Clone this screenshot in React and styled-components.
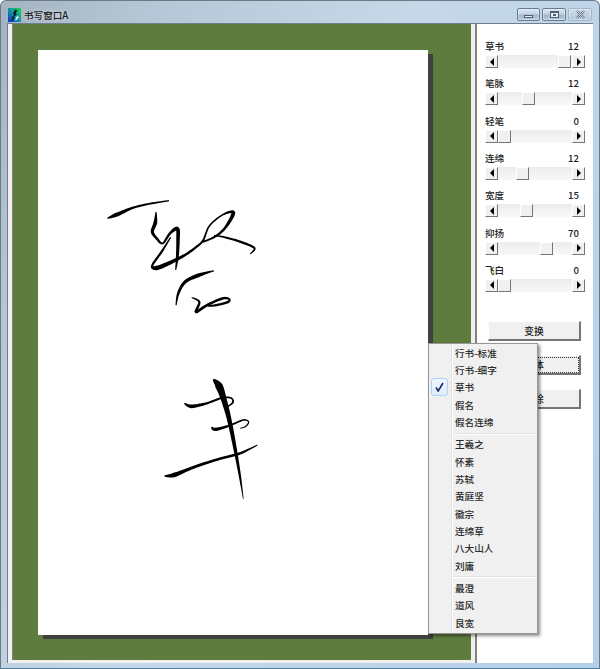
import React from "react";
import styled, {createGlobalStyle} from "styled-components";

const GlobalStyle = createGlobalStyle`
  html, body {
    margin: 0;
    padding: 0;
    background: #ffffff;
  }
  * {
    box-sizing: border-box;
  }
`

const FONT = `"Noto Sans CJK SC", "Noto Sans", sans-serif`

const Window = styled.div`
  position: relative;
  width: 600px;
  height: 669px;
  display: flex;
  flex-direction: column;
  overflow: hidden;
  padding: 0 6px 5px 6px;
  border: 1px solid #6b7a88;
  border-bottom-color: #4f7f9c;
  border-radius: 6px 6px 0 0;
  background: linear-gradient(115deg, #a4b3c0 0%, #b6c8d8 18%, #c6d8e8 45%, #b4d0ea 100%);
  font-family: ${FONT};
  font-weight: 500;
  color: #222222;
`

const TitleBar = styled.div`
  height: 22px;
  flex: none;
  display: flex;
  align-items: center;
  padding-top: 6px;
`

const AppIcon = styled.svg`
  width: 13px;
  height: 14px;
  flex: none;
  margin: 0 3px 0 1px;
`

const Title = styled.div`
  font-size: 9.6px;
  line-height: 14px;
  color: #202020;
  text-shadow: 0 0 4px rgba(255, 255, 255, .7);
`

const Controls = styled.div`
  margin-left: auto;
  margin-top: -2px;
  margin-right: 1px;
  display: flex;
  gap: 2px;
`

const Control = styled.div`
  width: ${props => props.$w}px;
  height: 13px;
  display: flex;
  align-items: center;
  justify-content: center;
  border: 1px solid ${props => props.$plain ? "#a3b7c9" : "#647c94"};
  border-radius: 2px;
  background: ${props => props.$plain
    ? "linear-gradient(#cfdce9, #b3c8dc)"
    : "linear-gradient(#dce6f1 0%, #c3d3e3 45%, #9fb6cd 55%, #b7cbde 100%)"};
  box-shadow: inset 0 0 0 1px rgba(255, 255, 255, .35);
`

const MinGlyph = styled.div`
  width: 9px;
  height: 3px;
  margin-top: 5px;
  background: #e9eff5;
  border: 1px solid #50606f;
`

const MaxGlyph = styled.div`
  width: 9px;
  height: 7px;
  background: #e9eff5;
  border: 1px solid #50606f;
  border-top-width: 2px;
  display: flex;
  align-items: center;
  justify-content: center;

  &::after {
    content: "";
    width: 3px;
    height: 2px;
    background: #50606f;
  }
`

const Client = styled.div`
  flex: 1;
  display: flex;
  min-height: 0;
  border-top: 1px solid #6f7f8e;
  border-left: 1px solid #6f7f8e;
`

const CanvasWrap = styled.div`
  width: 467px;
  flex: none;
  padding: 0 4px 3px 4px;
  background: #f0f0f0;
  display: flex;
`

const Canvas = styled.div`
  flex: 1;
  border-left: 1px solid #808080;
  background: #5f7c3f;
  padding: 26px 0 0 25px;
`

const Sheet = styled.div`
  width: 390px;
  height: 585px;
  background: #ffffff;
  box-shadow: 5px 4px 0 #404040;
`

const Ink = styled.svg`
  display: block;
  width: 390px;
  height: 585px;
`

const Panel = styled.div`
  flex: 1;
  background: #ffffff;
  border-left: 2px solid #808080;
  padding-top: 15px;
  display: flex;
  flex-direction: column;
`

const SliderGroup = styled.div`
  height: 37.33px;
  flex: none;
  padding: 0 7px 0 8px;
`

const SliderHead = styled.div`
  display: flex;
  justify-content: space-between;
  height: 16px;
  width: 94px;
  font-size: 9.6px;
  line-height: 14px;
`

const Track = styled.div`
  width: 100px;
  height: 13px;
  display: flex;
  background: linear-gradient(#ececec, #f8f8f8);
`

const TrackFill = styled.div`
  flex: 1;
`

const raised = `
  background: #f0f0f0;
  border-style: solid;
  border-width: 1px;
  border-color: #ffffff #757575 #757575 #ffffff;
`

const ArrowButton = styled.div`
  ${raised}
  width: 13px;
  height: 13px;
  flex: none;
  display: flex;
  align-items: center;
  justify-content: center;

  &::after {
    content: "";
    border-style: solid;
    border-width: 4px 0 4px 4px;
    border-color: transparent transparent transparent #000000;
    transform: ${props => props.$left ? "scaleX(-1)" : "none"};
  }
`

const Thumb = styled.div`
  ${raised}
  width: 13px;
  height: 13px;
  flex: none;
  margin-left: ${props => props.$offset}px;
`

const ButtonStack = styled.div`
  margin-top: 21px;
  margin-left: 11px;
  display: flex;
  flex-direction: column;
  gap: 14px;
`

const PanelButton = styled.div`
  width: 93px;
  height: 20px;
  ${raised}
  border-width: 1px 2px 2px 1px;
  font-size: 9.8px;
  line-height: 18px;
  text-align: center;
  outline: ${props => props.$focused ? "1px dotted #333333" : "none"};
  outline-offset: -3px;
`

const Menu = styled.div`
  position: absolute;
  left: 427px;
  top: 342px;
  width: 110px;
  height: 291px;
  border: 1px solid #979797;
  background: linear-gradient(to right, #f0f0f0 22px, #e2e3e3 22px, #e2e3e3 23px, #ffffff 23px, #ffffff 24px, #f0f0f0 24px);
  box-shadow: 2px 2px 3px rgba(0, 0, 0, .45);
`

const MenuItem = styled.div`
  height: 17.33px;
  display: flex;
  align-items: center;
  font-size: 9.6px;
  color: #2a2a2a;
`

const CheckCell = styled.div`
  width: 26px;
  flex: none;
  display: flex;
  align-items: center;
  padding-left: 2px;
`

const CheckBox = styled.div`
  width: 17px;
  height: 18px;
  display: flex;
  align-items: center;
  justify-content: center;
  border: 1px solid #aecff7;
  border-radius: 3px;
  background: linear-gradient(#eef5fd, #e0ecfb);
`

const MenuSep = styled.div`
  height: 5.1px;
  margin-left: 24px;
  display: flex;
  align-items: center;

  &::after {
    content: "";
    width: 100%;
    height: 1px;
    background: #e0e0e0;
    box-shadow: 0 1px 0 #ffffff;
  }
`

// catmull-rom through the pen points, then offset both ways by the pen width
const brushPath = (pts) => {
    const dense = []
    for (let i = 0; i < pts.length - 1; i++) {
        const p0 = pts[Math.max(i - 1, 0)]
        const p1 = pts[i]
        const p2 = pts[i + 1]
        const p3 = pts[Math.min(i + 2, pts.length - 1)]
        for (let s = 0; s < 8; s++) {
            const t = s / 8
            const c = (k) => 0.5 * (2 * p1[k] + (p2[k] - p0[k]) * t
                + (2 * p0[k] - 5 * p1[k] + 4 * p2[k] - p3[k]) * t * t
                + (3 * p1[k] - p0[k] - 3 * p2[k] + p3[k]) * t * t * t)
            dense.push([c(0), c(1), p1[2] + (p2[2] - p1[2]) * t])
        }
    }
    dense.push(pts[pts.length - 1])
    const left = []
    const right = []
    dense.forEach((p, i) => {
        const a = dense[Math.max(i - 1, 0)]
        const b = dense[Math.min(i + 1, dense.length - 1)]
        const dx = b[0] - a[0]
        const dy = b[1] - a[1]
        const len = Math.hypot(dx, dy) || 1
        const w = p[2] / 2
        left.push(`${(p[0] - dy / len * w).toFixed(2)} ${(p[1] + dx / len * w).toFixed(2)}`)
        right.unshift(`${(p[0] + dy / len * w).toFixed(2)} ${(p[1] - dx / len * w).toFixed(2)}`)
    })
    return "M" + left.concat(right).join("L") + "Z"
}

const scaled = (ox, oy, pts) => pts.map(([x, y, w]) => [ox + x / 3, oy + y / 3, w * 1.6])

const upper = [
    [[52, 85, .6], [80, 74, 2.6], [130, 53, 1.4], [180, 41, 1.2], [237, 32, .8]],
    [[198, 66, .6], [196, 98, 2.4], [187, 125, 2], [200, 145, 1.6], [218, 160, 1.2], [240, 130, 1.6], [262, 116, 2.4], [264, 150, 2.2], [262, 200, 1.8], [257, 240, .6]],
    [[242, 142, .8], [215, 185, 1.4], [187, 226, 1.4], [200, 234, 2.8], [240, 218, 2.4], [285, 195, 1.6], [320, 170, 1.4], [340, 150, 1.2], [358, 108, 1], [395, 76, 1], [426, 65, 1.8], [428, 76, 2.4], [405, 114, 1.6], [375, 140, 1.4], [338, 156, 1]],
    [[372, 136, .6], [405, 142, 1.2], [450, 155, 1.4], [493, 174, 1.4], [480, 192, .5]],
    [[372, 242, .6], [325, 256, 2.4], [285, 276, 2], [265, 310, 1.6], [258, 346, .6]],
    [[305, 322, .6], [328, 336, 1.4], [318, 366, 1.8], [350, 346, 1.6], [395, 326, 1.6], [416, 326, 1.2], [414, 336, 1.6], [375, 346, 1.4], [348, 348, .6]],
]

const lower = [
    [[190, 28, 1], [207, 48, 4.8], [222, 90, 3.6], [238, 150, 2.8], [255, 235, 2.2], [270, 320, 1.4], [280, 388, .3]],
    [[103, 100, .8], [125, 109, 2.4], [170, 100, 1.4], [215, 84, 1.2], [243, 84, 1], [248, 98, 1.2], [226, 114, .5]],
    [[184, 172, 1], [198, 178, 2.2], [240, 166, 1.2], [280, 150, 1], [296, 156, .8], [286, 170, .8], [270, 175, .4]],
    [[43, 318, .6], [72, 315, 2.8], [130, 292, 1.8], [200, 269, 1.6], [270, 250, 1.6], [322, 225, .6]],
]

const strokes = [
    ...upper.map(s => scaled(90, 190, s)),
    ...lower.map(s => scaled(150, 370, s)),
]

const sliders = [
    {label: "草书", value: 12, offset: 60},
    {label: "笔脉", value: 12, offset: 24},
    {label: "轻笔", value: 0, offset: 0},
    {label: "连绵", value: 12, offset: 18},
    {label: "宽度", value: 15, offset: 22},
    {label: "抑扬", value: 70, offset: 42},
    {label: "飞白", value: 0, offset: 0},
]

const menuGroups = [
    ["行书-标准", "行书-细字", "草书", "假名", "假名连绵"],
    ["王羲之", "怀素", "苏轼", "黄庭坚", "徽宗", "连绵草", "八大山人", "刘庸"],
    ["最澄", "道风", "良宽"],
]

const App = () => {
    return (
        <>
            <GlobalStyle/>
            <Window>
                <TitleBar>
                    <AppIcon viewBox="0 0 13 14">
                        <defs>
                            <linearGradient id="appIconFill" x1="0" y1="1" x2="1" y2="0">
                                <stop offset="0" stopColor="#1030d8"/>
                                <stop offset=".55" stopColor="#10a0a0"/>
                                <stop offset="1" stopColor="#20d040"/>
                            </linearGradient>
                        </defs>
                        <rect width="13" height="14" fill="url(#appIconFill)"/>
                        <path d="M7 1.5 L9.5 2.5 L7.5 5 L9 6 L5 9.5 L7 10 L4 13 L3 12 L5 10.5 L3 10 L6.5 6.5 L5 5.5 Z" fill="#06121e"/>
                        <path d="M9 8 L11 9 L8 12.5 L7 12 Z" fill="#e8f4f0"/>
                    </AppIcon>
                    <Title>书写窗口A</Title>
                    <Controls>
                        <Control $w={23}><MinGlyph/></Control>
                        <Control $w={24}><MaxGlyph/></Control>
                        <Control $w={24} $plain>
                            <svg width="11" height="9" viewBox="0 0 11 9">
                                <path d="M2 1 L9 8 M9 1 L2 8" stroke="#6c7a88" strokeWidth="2.4"/>
                                <path d="M2 1 L9 8 M9 1 L2 8" stroke="#e8eef4" strokeWidth=".8"/>
                            </svg>
                        </Control>
                    </Controls>
                </TitleBar>
                <Client>
                    <CanvasWrap>
                        <Canvas>
                            <Sheet>
                                <Ink viewBox="38 50 390 585">
                                    {strokes.map((s, i) => <path key={i} d={brushPath(s)} fill="#000000"/>)}
                                </Ink>
                            </Sheet>
                        </Canvas>
                    </CanvasWrap>
                    <Panel>
                        {sliders.map(s => (
                            <SliderGroup key={s.label}>
                                <SliderHead>
                                    <span>{s.label}</span>
                                    <span>{s.value}</span>
                                </SliderHead>
                                <Track>
                                    <ArrowButton $left/>
                                    <Thumb $offset={s.offset}/>
                                    <TrackFill/>
                                    <ArrowButton/>
                                </Track>
                            </SliderGroup>
                        ))}
                        <ButtonStack>
                            <PanelButton>变换</PanelButton>
                            <PanelButton $focused>字体</PanelButton>
                            <PanelButton>清除</PanelButton>
                        </ButtonStack>
                    </Panel>
                </Client>
                <Menu>
                    {menuGroups.map((group, g) => (
                        <React.Fragment key={g}>
                            {g > 0 && <MenuSep/>}
                            {group.map(name => (
                                <MenuItem key={name}>
                                    <CheckCell>
                                        {name === "草书" && (
                                            <CheckBox>
                                                <svg width="9" height="10" viewBox="0 0 9 10">
                                                    <path d="M1 5.5 L3.2 9 L8 1" fill="none" stroke="#15206a" strokeWidth="1.5"/>
                                                </svg>
                                            </CheckBox>
                                        )}
                                    </CheckCell>
                                    {name}
                                </MenuItem>
                            ))}
                        </React.Fragment>
                    ))}
                </Menu>
            </Window>
        </>
    )
}

export default App
